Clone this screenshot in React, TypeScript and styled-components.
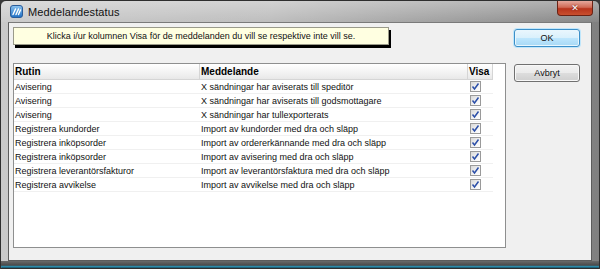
import React from "react";
import styled, {createGlobalStyle} from "styled-components";

const GlobalStyle = createGlobalStyle`
  html, body {
    margin: 0;
    padding: 0;
    background: #3a3a3a;
  }
  body {
    font-family: "Liberation Sans", Arial, sans-serif;
  }
`;

interface IMessageRow {
  routine: string;
  message: string;
  visible: boolean;
}

const rows: IMessageRow[] = [
  {routine: 'Avisering', message: 'X sändningar har aviserats till speditör', visible: true},
  {routine: 'Avisering', message: 'X sändningar har aviserats till godsmottagare', visible: true},
  {routine: 'Avisering', message: 'X sändningar har tullexporterats', visible: true},
  {routine: 'Registrera kundorder', message: 'Import av kundorder med dra och släpp', visible: true},
  {routine: 'Registrera inköpsorder', message: 'Import av ordererkännande med dra och släpp', visible: true},
  {routine: 'Registrera inköpsorder', message: 'Import av avisering med dra och släpp', visible: true},
  {routine: 'Registrera leverantörsfakturor', message: 'Import av leverantörsfaktura med dra och släpp', visible: true},
  {routine: 'Registrera avvikelse', message: 'Import av avvikelse med dra och släpp', visible: true},
];

const columns = '186px 268px 25px';

const AppIcon = () => (
  <svg width="13" height="13" viewBox="0 0 13 13">
    <defs>
      <linearGradient id="ic" x1="0" y1="0" x2="0" y2="1">
        <stop offset="0" stopColor="#8cc4f0"/>
        <stop offset="1" stopColor="#1f6fc4"/>
      </linearGradient>
    </defs>
    <rect x="0.5" y="0.5" width="12" height="12" rx="2.5" fill="url(#ic)" stroke="#2a5c9a"/>
    <path d="M3 9.5 L5.5 4 M6 9.5 L8.5 4 M8.5 9.5 L10.5 5" stroke="#fff" strokeWidth="1.4" strokeLinecap="round"/>
  </svg>
);

const CheckMark = () => (
  <svg width="9" height="9" viewBox="0 0 9 9">
    <path d="M1.5 4.5 L3.5 7 L7.5 1.5" fill="none" stroke="#2c4fa8" strokeWidth="1.5"/>
  </svg>
);

export default function App() {
  return <>
    <GlobalStyle/>
    <Frame>
      <TitleBar>
        <AppIcon/>
        <Title>Meddelandestatus</Title>
        <CloseButton>✕</CloseButton>
      </TitleBar>
      <Client>
        <LeftColumn>
          <InfoBox>
            Klicka i/ur kolumnen Visa för de meddelanden du vill se respektive inte vill se.
          </InfoBox>
          <Grid>
            <HeaderRow>
              <HeaderCell>Rutin</HeaderCell>
              <HeaderCell>Meddelande</HeaderCell>
              <HeaderCell>Visa</HeaderCell>
            </HeaderRow>
            {rows.map((row, index) => (
              <Row key={index}>
                <Cell>{row.routine}</Cell>
                <Cell>{row.message}</Cell>
                <CheckCell>
                  <CheckBox>{row.visible && <CheckMark/>}</CheckBox>
                </CheckCell>
              </Row>
            ))}
          </Grid>
        </LeftColumn>
        <ButtonColumn>
          <Button $primary>OK</Button>
          <Button>Avbryt</Button>
        </ButtonColumn>
      </Client>
      <BottomEdge/>
    </Frame>
  </>;
}

const Frame = styled('div')`
  width: 600px;
  height: 269px;
  box-sizing: border-box;
  display: flex;
  flex-direction: column;
  border: 1px solid #2e2e2e;
  border-radius: 6px 6px 2px 2px;
  background: linear-gradient(90deg, #c9c9c9 0%, #bababa 45%, #9a9a9a 75%, #808080 100%);
  overflow: hidden;
`;

const TitleBar = styled('div')`
  height: 21px;
  display: flex;
  align-items: center;
  padding-left: 9px;
  gap: 5px;
  background: linear-gradient(180deg, rgba(255, 255, 255, 0.35) 0%, rgba(255, 255, 255, 0.05) 100%);
`;

const Title = styled('div')`
  font-family: "Liberation Sans", Arial, sans-serif;
  font-size: 11px;
  color: #111;
  letter-spacing: 0.1px;
`;

const CloseButton = styled('div')`
  margin-left: auto;
  margin-right: 6px;
  align-self: flex-start;
  width: 36px;
  height: 15px;
  box-sizing: border-box;
  border: 1px solid #6b2214;
  border-top: none;
  border-radius: 0 0 4px 4px;
  background: linear-gradient(180deg, #e6a89c 0%, #d06a55 45%, #b8341c 55%, #c9502f 100%);
  color: #fff;
  font-family: "DejaVu Sans", sans-serif;
  font-weight: bold;
  font-size: 9px;
  display: flex;
  align-items: center;
  justify-content: center;
  text-shadow: 0 0 2px #5a1208;
`;

const Client = styled('div')`
  flex: 1;
  margin: 0 7px;
  display: flex;
  gap: 8px;
  padding: 4px 11px 12px 4px;
  background: #f0f0f0;
  border: 1px solid #5c5c5c;
  border-top-color: #7a7a7a;
`;

const LeftColumn = styled('div')`
  width: 495px;
  display: flex;
  flex-direction: column;
`;

const InfoBox = styled('div')`
  width: 376px;
  height: 18px;
  box-sizing: border-box;
  border: 1px solid #9a9a8a;
  background: #ffffe1;
  box-shadow: 2px 3px 0 #000;
  font-size: 9px;
  color: #111;
  display: flex;
  align-items: center;
  justify-content: center;
`;

const Grid = styled('div')`
  margin-top: 18px;
  flex: 1;
  border: 1px solid #8e8f8f;
  background: #fff;
`;

const HeaderRow = styled('div')`
  display: grid;
  grid-template-columns: ${columns};
  height: 16px;
`;

const HeaderCell = styled('div')`
  font-size: 10px;
  font-weight: bold;
  color: #000;
  padding: 1px 0 0 1px;
  box-sizing: border-box;
  background: linear-gradient(180deg, #ffffff 0%, #f2f2f2 60%, #e8e8e8 100%);
  border-right: 1px solid #d5d5d5;
  border-bottom: 1px solid #d5d5d5;
  line-height: 13px;
`;

const Row = styled('div')`
  display: grid;
  grid-template-columns: ${columns};
  height: 14px;
  box-sizing: border-box;
  border-bottom: 1px solid #f0f0f0;
  width: 479px;
`;

const Cell = styled('div')`
  font-size: 9px;
  color: #111;
  padding-left: 1px;
  line-height: 14px;
  white-space: nowrap;
  overflow: hidden;
`;

const CheckCell = styled('div')`
  display: flex;
  align-items: center;
  padding-left: 2px;
`;

const CheckBox = styled('div')`
  width: 11px;
  height: 11px;
  box-sizing: border-box;
  border: 1px solid #9a9a9a;
  background: linear-gradient(135deg, #d8d8d8 0%, #f4f4f4 60%, #ffffff 100%);
  display: flex;
  align-items: center;
  justify-content: center;
`;

const ButtonColumn = styled('div')`
  display: flex;
  flex-direction: column;
  gap: 17px;
  padding-top: 2px;
`;

const Button = styled('div')<{ $primary?: boolean }>`
  width: 66px;
  height: 18px;
  box-sizing: border-box;
  border-radius: 3px;
  border: 1px solid ${p => p.$primary ? '#3c8fc8' : '#707070'};
  background: ${p => p.$primary
    ? 'linear-gradient(180deg, #eaf6fd 0%, #d9f0fc 50%, #bee6fd 51%, #a7d9f5 100%)'
    : 'linear-gradient(180deg, #f2f2f2 0%, #ebebeb 50%, #dddddd 51%, #cfcfcf 100%)'};
  box-shadow: ${p => p.$primary ? '0 0 0 1px #bfe6fb, inset 0 0 0 1px #e8f6fd' : 'inset 0 0 0 1px #f8f8f8'};
  font-size: 9px;
  color: #111;
  display: flex;
  align-items: center;
  justify-content: center;
`;

const BottomEdge = styled('div')`
  height: 7px;
  background: linear-gradient(180deg, #6a6a6a 0%, #4a4a4a 60%, #2b8fb0 80%, #1a4a5c 100%);
`;
